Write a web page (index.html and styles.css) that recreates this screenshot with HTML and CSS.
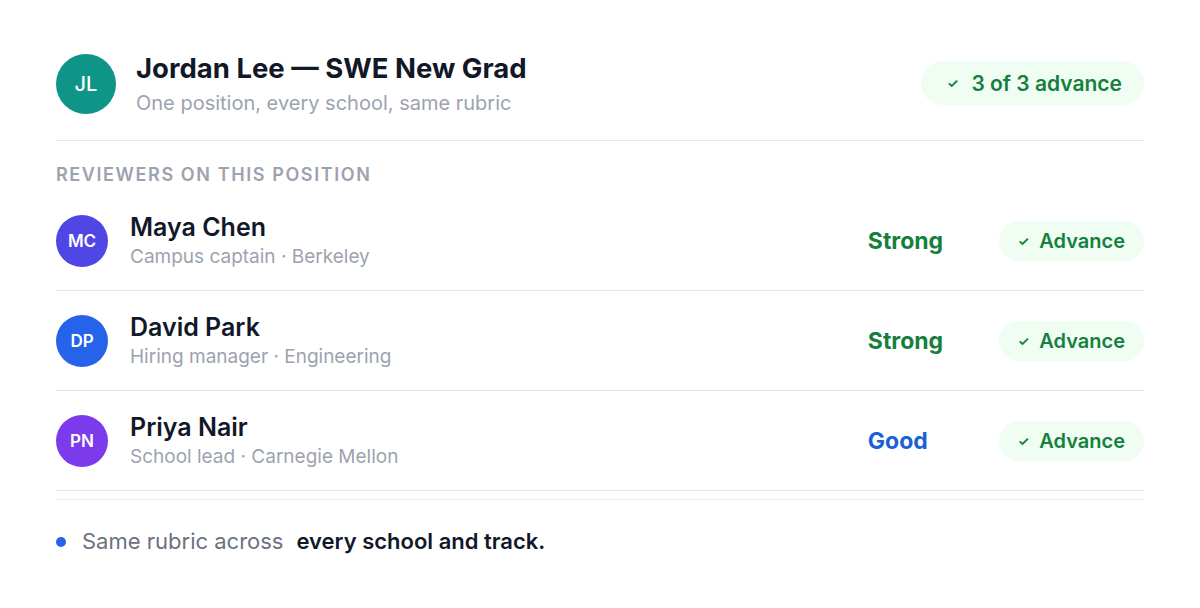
FILE: index.html
```html
<!DOCTYPE html>
<html lang="en">
<head>
  <meta charset="UTF-8">
  <meta name="viewport" content="width=device-width, initial-scale=1.0">
  <title>Jordan Lee — SWE New Grad</title>
  <link rel="stylesheet" href="styles.css">
</head>
<body>
  <div class="card">
    <div class="position-head">
      <div class="avatar avatar-lg teal">JL</div>
      <div class="head-text">
        <h1>Jordan Lee — SWE New Grad</h1>
        <p>One position, every school, same rubric</p>
      </div>
      <span class="pill pill-lg"><span class="check">✓</span> 3 of 3 advance</span>
    </div>

    <div class="section-label">Reviewers on this position</div>

    <div class="reviewers">
      <div class="reviewer">
        <div class="avatar indigo">MC</div>
        <div class="who">
          <div class="name">Maya Chen</div>
          <div class="role">Campus captain · Berkeley</div>
        </div>
        <div class="rating strong">Strong</div>
        <span class="pill"><span class="check">✓</span> Advance</span>
      </div>
      <div class="reviewer">
        <div class="avatar blue">DP</div>
        <div class="who">
          <div class="name">David Park</div>
          <div class="role">Hiring manager · Engineering</div>
        </div>
        <div class="rating strong">Strong</div>
        <span class="pill"><span class="check">✓</span> Advance</span>
      </div>
      <div class="reviewer">
        <div class="avatar violet">PN</div>
        <div class="who">
          <div class="name">Priya Nair</div>
          <div class="role">School lead · Carnegie Mellon</div>
        </div>
        <div class="rating good">Good</div>
        <span class="pill"><span class="check">✓</span> Advance</span>
      </div>
    </div>

    <div class="footnote">
      <span class="dot"></span>
      <span class="muted">Same rubric across</span>
      <strong>every school and track.</strong>
    </div>
  </div>
</body>
</html>
```

FILE: styles.css
```css
html, body {
  margin: 0;
  padding: 0;
  background: #ffffff;
  font-family: 'Inter', 'Noto Sans', sans-serif;
  color: #111827;
}
.card {
  padding: 52px 56px 0;
}
.position-head {
  display: flex;
  align-items: center;
  gap: 20px;
  padding-bottom: 24px;
  border-bottom: 1px solid #e5e7eb;
}
.head-text {
  flex: 1;
}
.head-text h1 {
  margin: 0;
  font-size: 27.5px;
  font-weight: 700;
  line-height: 32px;
  color: #111827;
}
.head-text p {
  margin: 6px 0 0;
  font-size: 20px;
  line-height: 26px;
  color: #9ca3af;
}
.avatar {
  width: 52px;
  height: 52px;
  border-radius: 50%;
  flex-shrink: 0;
  display: flex;
  align-items: center;
  justify-content: center;
  color: #fff;
  font-size: 17px;
  font-weight: 600;
}
.avatar-lg {
  width: 60px;
  height: 60px;
  font-size: 20px;
  font-weight: 500;
}
.teal { background: #0f9488; }
.indigo { background: #4f46e5; }
.blue { background: #2563eb; }
.violet { background: #7c3aed; }
.pill {
  display: inline-flex;
  align-items: center;
  gap: 10px;
  height: 40px;
  padding: 0 19px;
  border-radius: 20px;
  background: #effdf3;
  color: #15803d;
  font-size: 20px;
  font-weight: 600;
}
.pill-lg {
  height: 44px;
  border-radius: 22px;
  padding: 0 22px 0 26px;
  gap: 13px;
  margin-top: -2px;
  font-size: 21px;
}
.check {
  font-size: 13px;
  font-weight: 700;
}
.section-label {
  margin-top: 23px;
  font-size: 18px;
  line-height: 22px;
  font-weight: 600;
  letter-spacing: 1.6px;
  text-transform: uppercase;
  color: #9ca3af;
}
.reviewers {
  margin-top: 5px;
  padding-bottom: 8px;
  border-bottom: 1px solid #eceef1;
}
.reviewer {
  display: flex;
  align-items: center;
  gap: 22px;
  height: 99px;
  border-bottom: 1px solid #e5e7eb;
}
.who {
  flex: 1;
}
.name {
  font-size: 25px;
  font-weight: 600;
  line-height: 30px;
  color: #111827;
}
.role {
  margin-top: 3px;
  font-size: 19px;
  line-height: 24px;
  color: #9ca3af;
}
.rating {
  width: 109px;
  font-size: 23px;
  font-weight: 700;
}
.rating.strong { color: #15803d; }
.rating.good { color: #1d5fd6; }
.footnote {
  display: flex;
  align-items: center;
  margin-top: 28px;
  font-size: 22px;
  line-height: 27px;
}
.dot {
  width: 10px;
  height: 10px;
  border-radius: 50%;
  background: #2563eb;
  margin-right: 16px;
}
.muted {
  color: #6b7280;
  margin-right: 13px;
}
.footnote strong {
  font-weight: 600;
  color: #111827;
}
```
